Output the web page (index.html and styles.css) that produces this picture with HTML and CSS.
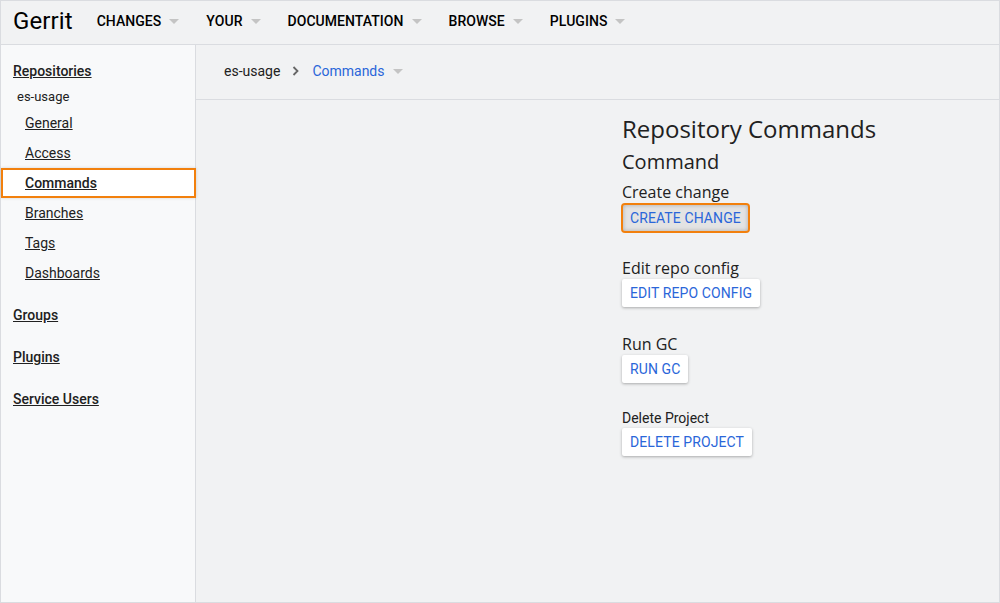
FILE: index.html
```html
<!DOCTYPE html>
<html>
<head>
<meta charset="utf-8">
<link rel="stylesheet" href="styles.css">
</head>
<body>
<div class="frame">
  <header class="topbar">
    <div class="logo">Gerrit</div>
    <nav class="menu">
      <span class="menu-item">CHANGES<i class="tri"></i></span>
      <span class="menu-item">YOUR<i class="tri"></i></span>
      <span class="menu-item">DOCUMENTATION<i class="tri"></i></span>
      <span class="menu-item">BROWSE<i class="tri"></i></span>
      <span class="menu-item">PLUGINS<i class="tri"></i></span>
    </nav>
  </header>
  <div class="body">
    <aside class="sidebar">
      <a class="sect first">Repositories</a>
      <div class="repo">es-usage</div>
      <a class="sub">General</a>
      <a class="sub">Access</a>
      <a class="sub active">Commands</a>
      <a class="sub">Branches</a>
      <a class="sub">Tags</a>
      <a class="sub">Dashboards</a>
      <a class="sect">Groups</a>
      <a class="sect">Plugins</a>
      <a class="sect">Service Users</a>
    </aside>
    <main class="main">
      <div class="crumbs">
        <span class="crumb-repo">es-usage</span>
        <svg class="chev" width="8" height="10" viewBox="0 0 8 10"><path d="M1.5 1 L5.5 5 L1.5 9" fill="none" stroke="#666" stroke-width="1.8"/></svg>
        <span class="crumb-cur">Commands</span>
        <i class="tri"></i>
      </div>
      <section class="content">
        <h1 class="title">Repository Commands</h1>
        <h2 class="subtitle">Command</h2>
        <div class="cmd">
          <div class="cmd-label">Create change</div>
          <button class="btn focused">CREATE CHANGE</button>
        </div>
        <div class="cmd">
          <div class="cmd-label">Edit repo config</div>
          <button class="btn">EDIT REPO CONFIG</button>
        </div>
        <div class="cmd">
          <div class="cmd-label">Run GC</div>
          <button class="btn">RUN GC</button>
        </div>
        <div class="cmd">
          <div class="cmd-label small">Delete Project</div>
          <button class="btn">DELETE PROJECT</button>
        </div>
      </section>
    </main>
  </div>
</div>
</body>
</html>
```
FILE: styles.css
```css
* { box-sizing: border-box; }
html, body { margin: 0; padding: 0; }
body {
  width: 1000px;
  height: 603px;
  font-family: Roboto, "Liberation Sans", sans-serif;
  color: #212121;
  overflow: hidden;
}
.frame {
  width: 1000px;
  height: 603px;
  border: 1px solid #dadce0;
  display: flex;
  flex-direction: column;
  background: #f1f2f3;
}
.topbar {
  height: 44px;
  flex: none;
  display: flex;
  align-items: center;
  background: #f1f2f3;
  border-bottom: 1px solid #dadce0;
  padding-left: 12px;
  padding-bottom: 3px;
}
.logo {
  font-size: 24px;
  color: #000;
  margin-right: 24px;
  letter-spacing: 0.1px;
}
.menu { display: flex; }
.menu-item {
  font-size: 14px;
  font-weight: 500;
  color: #000;
  display: flex;
  align-items: center;
  margin-right: 27px;
  letter-spacing: 0.05px;
}
.tri {
  display: inline-block;
  width: 0;
  height: 0;
  border-left: 5px solid transparent;
  border-right: 5px solid transparent;
  border-top: 5px solid #c4c4c4;
  margin-left: 8px;
}
.body {
  flex: 1;
  display: flex;
  min-height: 0;
}
.sidebar {
  width: 195px;
  flex: none;
  background: #f8f9fa;
  border-right: 1px solid #dadce0;
  display: flex;
  flex-direction: column;
  padding-top: 15px;
}
.sidebar a {
  color: #212121;
  text-decoration: underline;
  font-size: 14px;
  display: block;
  height: 30px;
  line-height: 30px;
}
.sect {
  font-weight: 500;
  padding-left: 12px;
  margin-top: 12px;
}
.sidebar .sect.first { margin-top: 0; height: 22px; line-height: 22px; }
.repo {
  font-size: 13px;
  padding-left: 16px;
  height: 26px;
  line-height: 30px;
}
.sub {
  padding-left: 24px;
}
.sub.active {
  background: #fff;
  font-weight: 500;
  outline: 2px solid #f2800d;
  outline-offset: -2px;
  margin-right: -1px;
  box-shadow: 0 0 3px rgba(0,0,0,0.15);
  position: relative;
}
.main {
  flex: 1;
  display: flex;
  flex-direction: column;
  background: #f1f2f3;
}
.crumbs {
  height: 55px;
  flex: none;
  display: flex;
  align-items: center;
  padding-left: 28px;
  padding-bottom: 2px;
  border-bottom: 1px solid #dadce0;
  font-size: 14px;
}
.crumb-repo { color: #212121; }
.chev { margin: 0 12px 0 12px; }
.crumb-cur { color: #2a66d9; }
.crumbs .tri { margin-left: 8px; }
.content {
  padding-left: 426px;
  padding-top: 13px;
  font-family: "Open Sans", sans-serif;
}
.title {
  margin: 0;
  font-size: 24px;
  font-weight: 400;
  line-height: 32px;
  color: #212121;
}
.subtitle {
  margin: 0;
  font-size: 20px;
  font-weight: 400;
  line-height: 34px;
  color: #212121;
}
.cmd { margin-bottom: 26px; }
.cmd:first-of-type { margin-top: 2px; }
.cmd-label {
  font-size: 16px;
  line-height: 22px;
  color: #212121;
}
.cmd-label.small {
  font-family: Roboto, sans-serif;
  font-size: 14px;
  line-height: 20px;
  margin-top: -1px;
  margin-bottom: 0;
}
.btn {
  display: block;
  font-family: Roboto, sans-serif;
  font-size: 14px;
  color: #2a66d9;
  background: #fff;
  border: none;
  border-radius: 2px;
  box-shadow: 0 1px 3px rgba(0,0,0,0.3);
  padding: 0 8px;
  height: 28px;
  margin: 0;
  letter-spacing: 0.1px;
}
.btn.focused {
  background: #e3e3e3;
  outline: 2px solid #f2800d;
  outline-offset: 0;
  height: 26px;
  box-shadow: inset 0 0 4px rgba(0,0,0,0.25);
  margin: 2px 0 0 1px;
  padding: 0 7px;
}
```
